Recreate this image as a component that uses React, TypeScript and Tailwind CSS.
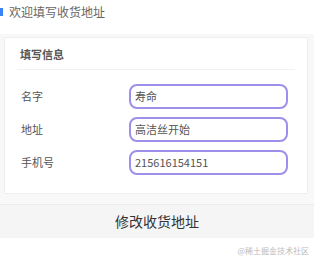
import React from "react";

const font = { fontFamily: '"Noto Sans CJK SC", "Noto Sans", sans-serif' };

function Row({ label, value }: { label: string; value: string }) {
  return (
    <div className="flex items-center h-[25px]">
      <div className="w-[124px] pl-[16px] text-[11px] text-[#555]">{label}</div>
      <div className="w-[159px] h-[25px] rounded-[8px] border-[2px] border-[#9d90ea] flex items-center pl-[4px] text-[11px] text-[#555]">
        {value}
      </div>
    </div>
  );
}

export default function App() {
  return (
    <div className="w-[314px] h-[259px] bg-white relative overflow-hidden" style={font}>
      <div className="flex items-center h-[22px] pt-[2px]">
        <div className="w-[3px] h-[8px] bg-[#3b82f6] ml-0" />
        <div className="ml-[6px] text-[12px] text-[#666] leading-none">欢迎填写收货地址</div>
      </div>
      <div className="h-[12px]" />
      <div className="bg-[#f8f8f8] pt-[3px] pl-[4px] pr-[6px] pb-[10px]">
        <div className="bg-white border border-[#eeeeee] rounded-[2px] h-[157px]">
          <div className="h-[31px] flex items-center pl-[15px] pt-[2px] text-[11px] text-[#555] font-semibold">填写信息</div>
          <div className="mx-[12px] h-px bg-[#f2f2f2]" />
          <div className="pt-[14px] flex flex-col gap-[8px]">
            <Row label="名字" value="寿命" />
            <Row label="地址" value="高洁丝开始" />
            <Row label="手机号" value="215616154151" />
          </div>
        </div>
      </div>
      <div className="h-[34px] bg-[#f5f5f5] border-t border-[#ececec] flex items-center justify-center text-[14px] text-[#333]">
        修改收货地址
      </div>
      <div className="absolute right-[5px] bottom-[4px] text-[8px] text-[#bbb] leading-none">@稀土掘金技术社区</div>
    </div>
  );
}
